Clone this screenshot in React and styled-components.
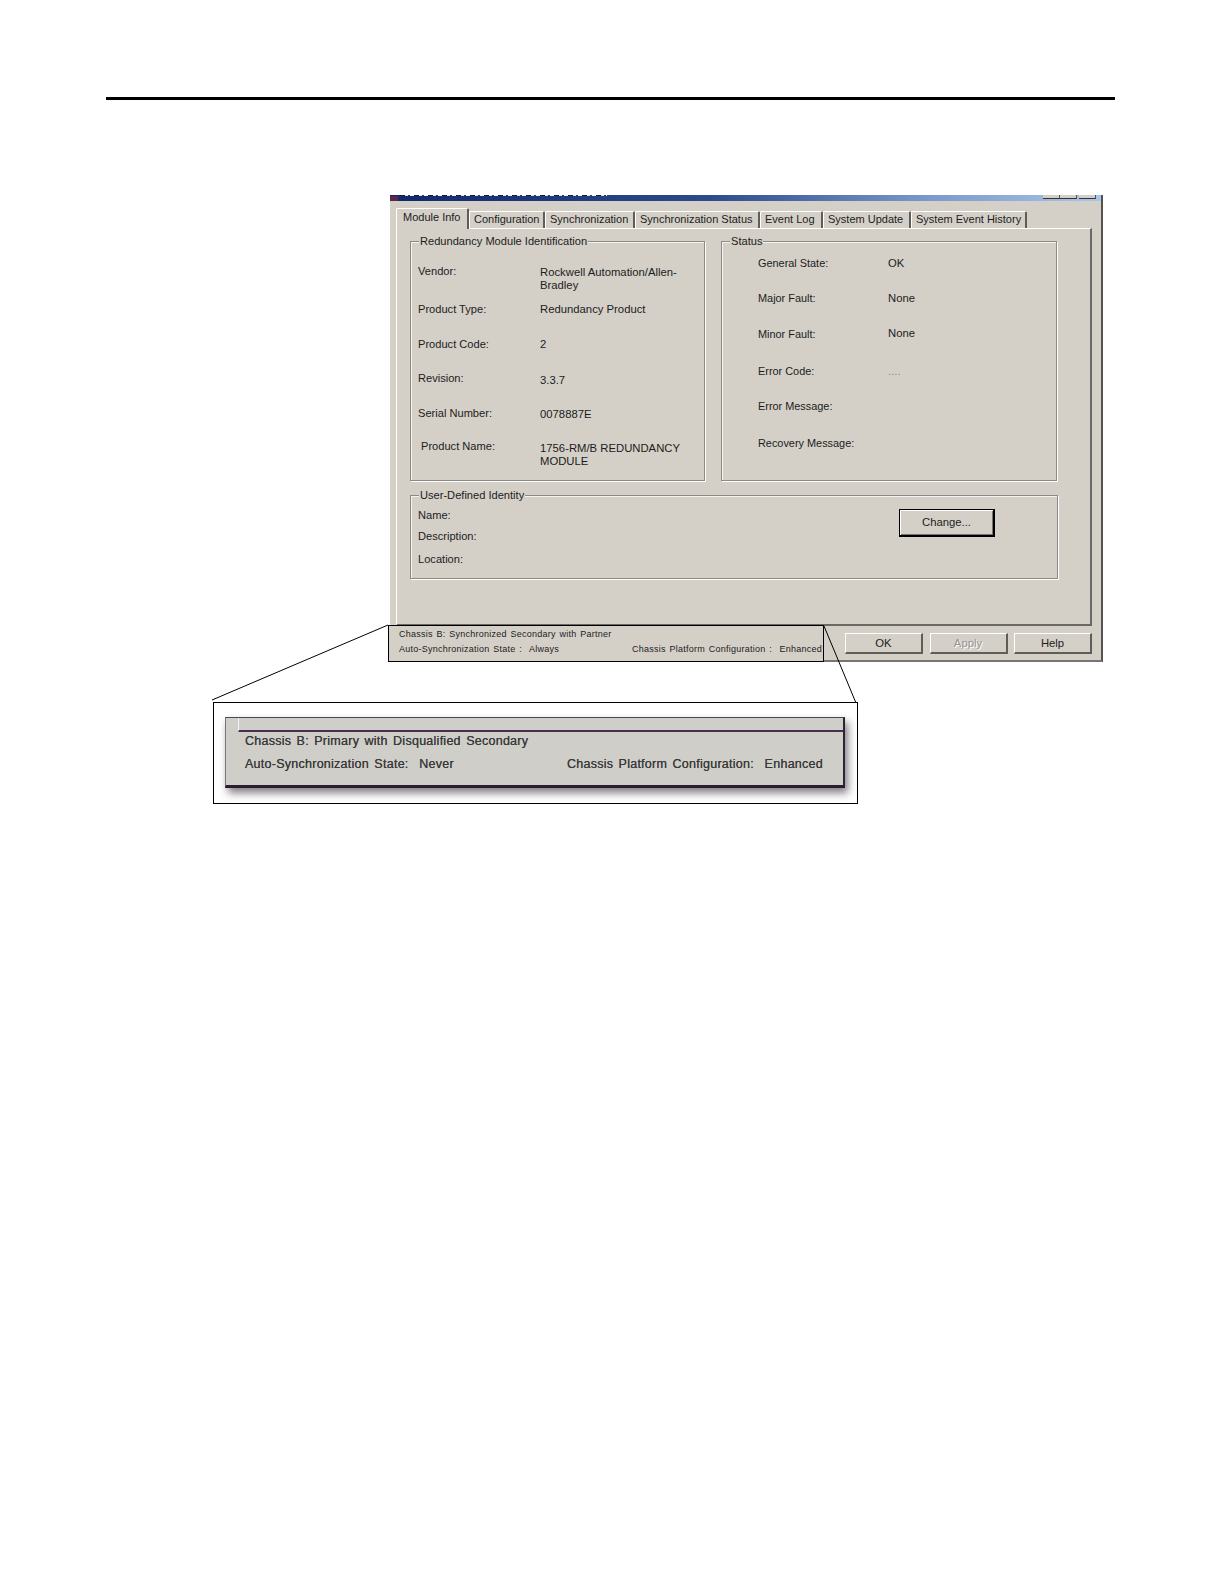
import React from 'react';
import styled, { createGlobalStyle } from 'styled-components';

const GlobalStyle = createGlobalStyle`
  html, body {
    margin: 0;
    background: #fff;
    font-family: 'Liberation Sans', Arial, sans-serif;
  }
`;

const Page = styled.div`
  position: relative;
  width: 1224px;
  height: 1584px;
  padding: 97px 109px 0 106px;
  box-sizing: border-box;
  background: #fff;
  overflow: hidden;
`;
const Rule = styled.div`
  height: 3px;
  background: #000;
`;
const Dialog = styled.div`
  position: relative;
  box-sizing: border-box;
  margin: 95px 0 0 284px;
  width: 713px;
  height: 467px;
  background: #d4d0c8;
  border-right: 2px solid #55534e;
  border-bottom: 2px solid #77756f;
  font-size: 11.3px;
  color: #1c1c1c;
`;
const TitleBar = styled.div`
  position: relative;
  height: 6px;
  background: linear-gradient(90deg, #12286e 0%, #2d4a8c 45%, #7a97c8 75%, #a9c6ec 100%);
  &::before {
    content: '';
    position: absolute;
    left: 10px;
    top: 0;
    width: 207px;
    height: 1px;
    background: repeating-linear-gradient(90deg, #1a1a2a 0 5px, #dfe4ee 5px 8px, #30384e 8px 10px, #f2f4f8 10px 14px);
  }
  &::after {
    content: '';
    position: absolute;
    left: 0;
    top: 1px;
    width: 8px;
    height: 5px;
    background: #5d2848;
  }
`;
const WindowControls = styled.div`
  position: absolute;
  right: 5px;
  top: 0;
  display: flex;
`;
const WindowControl = styled.span`
  width: 16px;
  height: 3px;
  background: #d4d0c8;
  border-right: 1px solid #555;
  border-bottom: 1px solid #333;
  &:last-child {
    margin-left: 2px;
  }
`;
const Body = styled.div`
  padding: 7px 9px 0 6px;
`;
const TabRow = styled.div`
  position: relative;
  z-index: 1;
  display: flex;
  align-items: flex-end;
  height: 20px;
  font-size: 11px;
`;
const Tab = styled.div`
  box-sizing: border-box;
  width: ${(p) => p.$w}px;
  height: ${(p) => (p.$active ? 21 : 17)}px;
  margin-bottom: ${(p) => (p.$active ? -1 : 0)}px;
  padding-left: ${(p) => (p.$active ? 6 : 4)}px;
  padding-top: ${(p) => (p.$active ? 1 : 0)}px;
  line-height: 14px;
  white-space: nowrap;
  background: #d4d0c8;
  border-top: 1px solid #fff;
  border-left: 1px solid #fff;
  border-right: 2px solid #5f5d58;
  border-radius: 2px 2px 0 0;
`;
const Panel = styled.div`
  box-sizing: border-box;
  height: 398px;
  padding: 12px 13px 0;
  border-top: 1px solid #fff;
  border-left: 1px solid #fff;
  border-right: 2px solid #6a6862;
  border-bottom: 2px solid #6a6862;
`;
const TopGroups = styled.div`
  display: grid;
  grid-template-columns: 295px 336px;
  column-gap: 16px;
`;
const Group = styled.div`
  position: relative;
  box-sizing: border-box;
  height: ${(p) => p.$h}px;
  padding: ${(p) => p.$pt}px 0 0 ${(p) => p.$pl}px;
  border: 1px solid #8b8983;
  box-shadow: 1px 1px 0 #fff, inset 1px 1px 0 #f4f3ef;
  font-size: ${(p) => p.$fs}px;
`;
const Legend = styled.span`
  position: absolute;
  left: 8px;
  top: -7px;
  padding: 0 1px;
  font-size: 11.1px;
  line-height: 13px;
  background: #d4d0c8;
  white-space: nowrap;
`;
const Field = styled.div`
  display: grid;
  grid-template-columns: ${(p) => p.$col}px 1fr;
  height: ${(p) => p.$h}px;
  line-height: 12.5px;
`;
const Label = styled.div`
  padding-top: ${(p) => p.$nudge || 0}px;
  padding-left: ${(p) => p.$indent || 0}px;
`;
const Value = styled.div`
  padding-top: ${(p) => p.$nudge || 0}px;
  font-size: 11.3px;
  color: ${(p) => (p.$muted ? '#8d8b86' : 'inherit')};
`;
const UserGroup = styled(Group)`
  display: flex;
  justify-content: space-between;
  margin-top: 14px;
  width: 648px;
  padding-right: 62px;
`;
const ChangeButton = styled.div`
  box-sizing: border-box;
  width: 96px;
  height: 28px;
  font-size: 11.3px;
  line-height: 24px;
  text-align: center;
  border-style: solid;
  border-color: #000;
  border-width: 1px 2px 2px 1px;
  box-shadow: inset 1px 1px 0 #fff, inset -1px -1px 0 #77756f;
`;
const Footer = styled.div`
  display: flex;
  align-items: flex-start;
  margin: -1px 0 0 -8px;
  height: 37px;
`;
const StatusBox = styled.div`
  box-sizing: border-box;
  width: 436px;
  height: 37px;
  padding: 1px 1px 0 10px;
  border: 1px solid #000;
  background: #d4d0c8;
  font-size: 9px;
  letter-spacing: 0.25px;
  word-spacing: 1px;
  line-height: 15px;
`;
const StatusLine = styled.div`
  display: flex;
  justify-content: space-between;
  white-space: pre;
`;
const Buttons = styled.div`
  display: flex;
  gap: 6.5px;
  margin: 8px 0 0 21px;
`;
const DialogButton = styled.div`
  box-sizing: border-box;
  width: 78px;
  height: 21px;
  line-height: 18px;
  text-align: center;
  border-top: 1px solid #fff;
  border-left: 1px solid #fff;
  border-right: 2px solid #5f5d58;
  border-bottom: 2px solid #5f5d58;
  color: ${(p) => (p.$disabled ? '#96948f' : 'inherit')};
  text-shadow: ${(p) => (p.$disabled ? '1px 1px 0 #fff' : 'none')};
`;
const Callout = styled.div`
  box-sizing: border-box;
  margin: 40px 0 0 107px;
  width: 645px;
  height: 102px;
  padding: 14px 11px 0;
  border: 1px solid #000;
`;
const CalloutBar = styled.div`
  box-sizing: border-box;
  height: 71px;
  width: 620px;
  padding: 0 20px 0 19px;
  background: #cfcec8;
  border-top: 1px solid #4a4a4a;
  border-right: 2px solid #2c2430;
  border-bottom: 3px solid #2c1c30;
  border-left: 1px solid #77757a;
  box-shadow: 3px 5px 8px rgba(50, 40, 50, 0.6);
  color: #3a3a3a;
  font-size: 12.5px;
  letter-spacing: 0.26px;
  word-spacing: 1.6px;
  text-shadow: 0 0 0.4px #444;
`;
const CalloutStrip = styled.div`
  box-sizing: border-box;
  height: 14px;
  margin: 0 -20px 0 -7px;
  border-left: 1px solid #f2f2ee;
  border-bottom: 2px solid #4b2f52;
`;
const CalloutLine = styled.div`
  display: flex;
  justify-content: space-between;
  height: ${(p) => p.$h}px;
  line-height: ${(p) => p.$h}px;
  white-space: pre;
`;
const Connectors = styled.svg`
  position: absolute;
  left: 0;
  top: 0;
  pointer-events: none;
`;

const tabs = [
  { text: 'Module Info', w: 73, active: true },
  { text: 'Configuration', w: 76 },
  { text: 'Synchronization', w: 90 },
  { text: 'Synchronization Status', w: 125 },
  { text: 'Event Log', w: 63 },
  { text: 'System Update', w: 88 },
  { text: 'System Event History', w: 116 },
];

const identity = [
  { label: 'Vendor:', value: <>Rockwell Automation/Allen-<br />Bradley</>, h: 38, valueNudge: 1 },
  { label: 'Product Type:', value: 'Redundancy Product', h: 35 },
  { label: 'Product Code:', value: '2', h: 34 },
  { label: 'Revision:', value: '3.3.7', h: 35, valueNudge: 2 },
  { label: 'Serial Number:', value: '0078887E', h: 33, valueNudge: 1 },
  { label: 'Product Name:', value: <>1756-RM/B REDUNDANCY<br />MODULE</>, h: 32, valueNudge: 2, indent: 3 },
];

const status = [
  { label: 'General State:', value: 'OK', h: 35 },
  { label: 'Major Fault:', value: 'None', h: 35 },
  { label: 'Minor Fault:', value: 'None', h: 38, labelNudge: 1 },
  { label: 'Error Code:', value: '....', h: 35, muted: true },
  { label: 'Error Message:', h: 37 },
  { label: 'Recovery Message:', h: 20 },
];

const user = [
  { label: 'Name:', h: 21 },
  { label: 'Description:', h: 23 },
  { label: 'Location:', h: 20 },
];

const App = () => (
  <Page>
    <GlobalStyle />
    <Rule />
    <Dialog>
      <TitleBar>
        <WindowControls>
          <WindowControl />
          <WindowControl />
          <WindowControl />
        </WindowControls>
      </TitleBar>
      <Body>
        <TabRow>
          {tabs.map((t) => (
            <Tab key={t.text} $w={t.w} $active={t.active}>
              {t.text}
            </Tab>
          ))}
        </TabRow>
        <Panel>
          <TopGroups>
            <Group $h={240} $pt={23} $pl={7} $fs={11.1}>
              <Legend>Redundancy Module Identification</Legend>
              {identity.map((f) => (
                <Field key={f.label} $col={122} $h={f.h}>
                  <Label $indent={f.indent}>{f.label}</Label>
                  <Value $nudge={f.valueNudge}>{f.value}</Value>
                </Field>
              ))}
            </Group>
            <Group $h={240} $pt={15} $pl={36} $fs={10.9}>
              <Legend>Status</Legend>
              {status.map((f) => (
                <Field key={f.label} $col={130} $h={f.h}>
                  <Label $nudge={f.labelNudge}>{f.label}</Label>
                  <Value $muted={f.muted}>{f.value}</Value>
                </Field>
              ))}
            </Group>
          </TopGroups>
          <UserGroup $h={84} $pt={13} $pl={7} $fs={11.1}>
            <Legend>User-Defined Identity</Legend>
            <div>
              {user.map((f) => (
                <Field key={f.label} $col={122} $h={f.h}>
                  <Label>{f.label}</Label>
                </Field>
              ))}
            </div>
            <ChangeButton>Change...</ChangeButton>
          </UserGroup>
        </Panel>
        <Footer>
          <StatusBox>
            <StatusLine>Chassis B: Synchronized Secondary with Partner</StatusLine>
            <StatusLine>
              <span>Auto-Synchronization State :  Always</span>
              <span>Chassis Platform Configuration :  Enhanced</span>
            </StatusLine>
          </StatusBox>
          <Buttons>
            <DialogButton>OK</DialogButton>
            <DialogButton $disabled>Apply</DialogButton>
            <DialogButton>Help</DialogButton>
          </Buttons>
        </Footer>
      </Body>
    </Dialog>
    <Callout>
      <CalloutBar>
        <CalloutStrip />
        <CalloutLine $h={19}>Chassis B: Primary with Disqualified Secondary</CalloutLine>
        <CalloutLine $h={26}>
          <span>Auto-Synchronization State:  Never</span>
          <span>Chassis Platform Configuration:  Enhanced</span>
        </CalloutLine>
      </CalloutBar>
    </Callout>
    <Connectors width="1224" height="1584">
      <line x1="388" y1="625" x2="212" y2="700" stroke="#000" strokeWidth="1" />
      <line x1="824" y1="626" x2="856" y2="703" stroke="#000" strokeWidth="1" />
    </Connectors>
  </Page>
);

export default App;
